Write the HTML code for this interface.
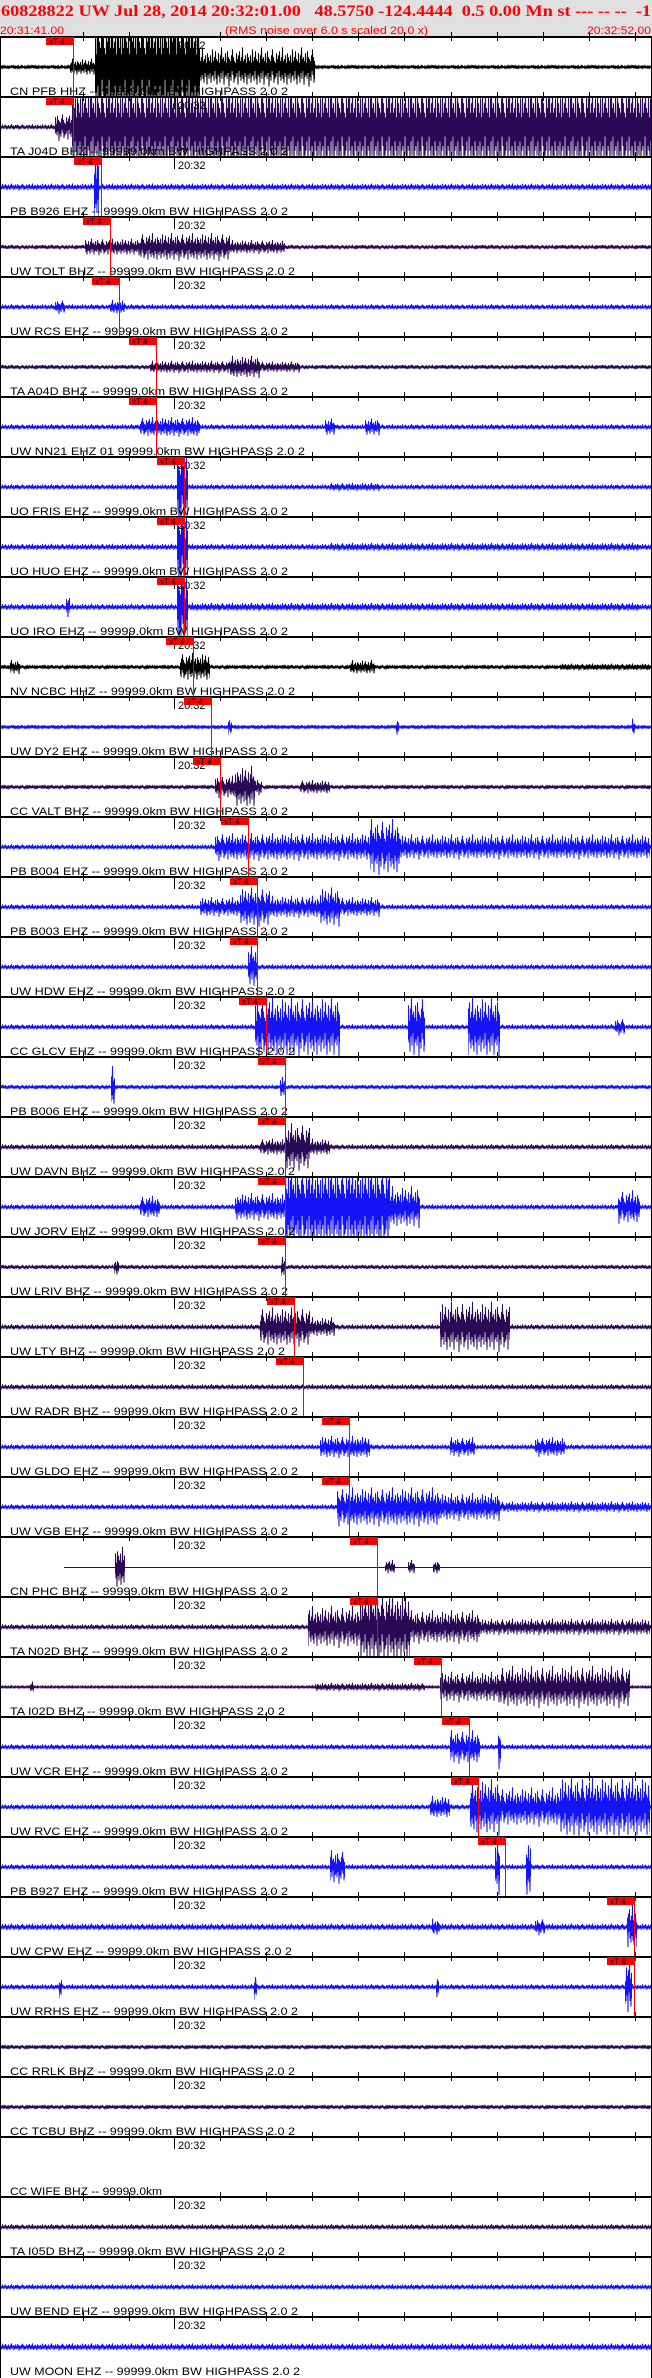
<!DOCTYPE html>
<html><head><meta charset="utf-8">
<style>
html,body{margin:0;padding:0;background:#fff;}
body{width:652px;height:2378px;overflow:hidden;position:relative;}
#hdr{position:absolute;left:0;top:0;width:652px;height:37px;background:#e0e0e0;}
svg{position:absolute;left:0;top:0;}
.l,.t{font-family:"Liberation Sans",sans-serif;font-size:11px;fill:#000;stroke:none;}
.m{font-family:"Liberation Sans",sans-serif;font-size:8px;fill:#000;stroke:none;}
</style></head>
<body>
<div id="hdr"></div>
<svg width="652" height="2378" xmlns="http://www.w3.org/2000/svg" xmlns:xlink="http://www.w3.org/1999/xlink">
<defs>
<path id="z" fill="none" vector-effect="non-scaling-stroke" stroke-width="1" d="M0 .3L.5-.6 1 .8 1.5-.2 2 .5 2.5-.9 3 .4 3.5-.3 4 .7 4.5-.5 5 .2 5.5-.8 6 .6 6.5-.4 7 .9 7.5-.3 8 .4 8.5-.7 9 .5 9.5-.2 10 .8 10.5-.6 11 .3 11.5-1 12 .6 12.5-.4 13 .2 13.5-.5 14 .9 14.5-.3 15 .5 15.5-.7 16 .4 16.5-.2 17 .6 17.5-.8 18 .3 18.5-.5 19 1 19.5-.4 20 .5 20.5-.3 21 .7 21.5-.6 22 .2 22.5-.9 23 .4 23.5-.5 24 .8 24.5-.3 25 .6 25.5-.2 26 .5 26.5-.7 27 .3 27.5-.4 28 .9 28.5-.6 29 .2 29.5-.8 30 .5 30.5-.3 31 .7 31.5-.5 32 .4 32.5-1 33 .6 33.5-.3 34 .8 34.5-.4 35 .3 35.5-.6 36 .5 36.5-.2 37 .9 37.5-.7 38 .4 38.5-.5 39 .6 39.5-.3 40 .3"/>
<g id="zz" transform="scale(1,1.4)">
<use xlink:href="#z" x="0"/><use xlink:href="#z" x="40"/><use xlink:href="#z" x="80"/><use xlink:href="#z" x="120"/><use xlink:href="#z" x="160"/><use xlink:href="#z" x="200"/><use xlink:href="#z" x="240"/><use xlink:href="#z" x="280"/><use xlink:href="#z" x="320"/><use xlink:href="#z" x="360"/><use xlink:href="#z" x="400"/><use xlink:href="#z" x="440"/><use xlink:href="#z" x="480"/><use xlink:href="#z" x="520"/><use xlink:href="#z" x="560"/><use xlink:href="#z" x="600"/><use xlink:href="#z" x="640"/>
</g>
<g id="tk" fill="#000" stroke="none">
<rect x="0" y="-1" width="652" height="2"/>
<rect x="83" y="-5" width="1" height="9"/><rect x="129" y="-5" width="1" height="9"/><rect x="220" y="-5" width="1" height="9"/><rect x="266" y="-5" width="1" height="9"/><rect x="312" y="-5" width="1" height="9"/><rect x="358" y="-5" width="1" height="9"/><rect x="404" y="-5" width="1" height="9"/><rect x="451" y="-5" width="1" height="9"/><rect x="497" y="-5" width="1" height="9"/><rect x="543" y="-5" width="1" height="9"/><rect x="589" y="-5" width="1" height="9"/><rect x="635" y="-5" width="1" height="9"/>
<rect x="174" y="0" width="1" height="12"/>
<text class="t" x="178" y="12">20:32</text>
</g>
<g id="mk" stroke="none">
<rect x="0" y="0" width="28" height="8" fill="#ff0000"/>
<text class="m" x="3" y="7.5">xT 4</text>
<rect x="27" y="0" width="1" height="60" fill="#ff0000"/>
</g>
</defs>
<text x="1" y="16" fill="#ff0000" font-family="Liberation Serif, serif" font-weight="bold" font-size="16" textLength="650" lengthAdjust="spacingAndGlyphs" xml:space="preserve">60828822 UW Jul 28, 2014 20:32:01.00   48.5750 -124.4444  0.5 0.00 Mn st --- -- --  -1</text>
<text x="0" y="34" fill="#ff0000" font-family="Liberation Sans, sans-serif" font-size="11" textLength="64" lengthAdjust="spacingAndGlyphs">20:31:41.00</text>
<text x="225" y="34" fill="#ff0000" font-family="Liberation Sans, sans-serif" font-size="11" textLength="203" lengthAdjust="spacingAndGlyphs">(RMS noise over 6.0 s scaled 20.0 x)</text>
<text x="587" y="34" fill="#ff0000" font-family="Liberation Sans, sans-serif" font-size="11" textLength="64" lengthAdjust="spacingAndGlyphs">20:32:52.00</text>

<g transform="translate(0,37)"><g stroke="#000">
<svg x="1" width="650" height="60"><use xlink:href="#zz" transform="translate(-1,30) scale(1,1.3)"/></svg>
<svg x="70" width="25" height="60"><use xlink:href="#zz" transform="translate(-70,30) scale(1,6)"/></svg>
<svg x="95" width="105" height="60"><use xlink:href="#zz" transform="translate(-95,30) scale(1,45)"/></svg>
<svg x="200" width="115" height="60"><use xlink:href="#zz" transform="translate(-190,30) scale(1,14)"/></svg>
</g><use xlink:href="#tk"/><text class="l" x="10" y="58" textLength="278" lengthAdjust="spacingAndGlyphs">CN PFB HHZ -- 99999.0km BW  HIGHPASS  2.0  2</text><use xlink:href="#mk" x="46"/></g>

<g transform="translate(0,97)"><g stroke="#2a0a55">
<svg x="1" width="650" height="60"><use xlink:href="#zz" transform="translate(-1,30) scale(1,2)"/></svg>
<svg x="55" width="17" height="60"><use xlink:href="#zz" transform="translate(-55,30) scale(1,10)"/></svg>
<svg x="72" width="579" height="60"><use xlink:href="#zz" transform="translate(-72,30) scale(1,34)"/></svg>
</g><use xlink:href="#tk"/><text class="l" x="10" y="58" textLength="278" lengthAdjust="spacingAndGlyphs">TA J04D BHZ -- 99999.0km BW  HIGHPASS  2.0  2</text><use xlink:href="#mk" x="46"/></g>

<g transform="translate(0,157)"><g stroke="#1414f5">
<svg x="1" width="650" height="60"><use xlink:href="#zz" transform="translate(-1,30) scale(1,2.5)"/></svg>
<svg x="94" width="5" height="60"><use xlink:href="#zz" transform="translate(-94,30) scale(1,30)"/></svg>
</g><use xlink:href="#tk"/><text class="l" x="10" y="58" textLength="278" lengthAdjust="spacingAndGlyphs">PB B926 EHZ -- 99999.0km BW  HIGHPASS  2.0  2</text><use xlink:href="#mk" x="74"/></g>

<g transform="translate(0,217)"><g stroke="#2a0a55">
<svg x="1" width="650" height="60"><use xlink:href="#zz" transform="translate(-1,30) scale(1,1.6)"/></svg>
<svg x="85" width="55" height="60"><use xlink:href="#zz" transform="translate(-85,30) scale(1,6)"/></svg>
<svg x="140" width="90" height="60"><use xlink:href="#zz" transform="translate(-140,30) scale(1,10)"/></svg>
<svg x="230" width="55" height="60"><use xlink:href="#zz" transform="translate(-230,30) scale(1,5)"/></svg>
</g><use xlink:href="#tk"/><text class="l" x="10" y="58" textLength="285" lengthAdjust="spacingAndGlyphs">UW TOLT BHZ -- 99999.0km BW  HIGHPASS  2.0  2</text><use xlink:href="#mk" x="83"/></g>

<g transform="translate(0,277)"><g stroke="#1414f5">
<svg x="1" width="650" height="60"><use xlink:href="#zz" transform="translate(-1,30) scale(1,2)"/></svg>
<svg x="55" width="10" height="60"><use xlink:href="#zz" transform="translate(-55,30) scale(1,5)"/></svg>
<svg x="110" width="15" height="60"><use xlink:href="#zz" transform="translate(-110,30) scale(1,5)"/></svg>
</g><use xlink:href="#tk"/><text class="l" x="10" y="58" textLength="278" lengthAdjust="spacingAndGlyphs">UW RCS EHZ -- 99999.0km BW  HIGHPASS  2.0  2</text><use xlink:href="#mk" x="92"/></g>

<g transform="translate(0,337)"><g stroke="#2a0a55">
<svg x="1" width="650" height="60"><use xlink:href="#zz" transform="translate(-1,30) scale(1,1.6)"/></svg>
<svg x="150" width="80" height="60"><use xlink:href="#zz" transform="translate(-150,30) scale(1,4.5)"/></svg>
<svg x="230" width="30" height="60"><use xlink:href="#zz" transform="translate(-230,30) scale(1,8)"/></svg>
<svg x="260" width="40" height="60"><use xlink:href="#zz" transform="translate(-260,30) scale(1,4)"/></svg>
</g><use xlink:href="#tk"/><text class="l" x="10" y="58" textLength="278" lengthAdjust="spacingAndGlyphs">TA A04D BHZ -- 99999.0km BW  HIGHPASS  2.0  2</text><use xlink:href="#mk" x="129"/></g>

<g transform="translate(0,397)"><g stroke="#1414f5">
<svg x="1" width="650" height="60"><use xlink:href="#zz" transform="translate(-1,30) scale(1,2)"/></svg>
<svg x="140" width="60" height="60"><use xlink:href="#zz" transform="translate(-140,30) scale(1,7)"/></svg>
<svg x="325" width="10" height="60"><use xlink:href="#zz" transform="translate(-325,30) scale(1,6)"/></svg>
<svg x="365" width="15" height="60"><use xlink:href="#zz" transform="translate(-365,30) scale(1,6)"/></svg>
</g><use xlink:href="#tk"/><text class="l" x="10" y="58" textLength="295" lengthAdjust="spacingAndGlyphs">UW NN21 EHZ 01 99999.0km BW  HIGHPASS  2.0  2</text><use xlink:href="#mk" x="129"/></g>

<g transform="translate(0,457)"><g stroke="#1414f5">
<svg x="1" width="650" height="60"><use xlink:href="#zz" transform="translate(-1,30) scale(1,2)"/></svg>
<svg x="177" width="11" height="60"><use xlink:href="#zz" transform="translate(-177,30) scale(1,30)"/></svg>
<svg x="330" width="50" height="60"><use xlink:href="#zz" transform="translate(-330,30) scale(1,3)"/></svg>
</g><use xlink:href="#tk"/><text class="l" x="10" y="58" textLength="278" lengthAdjust="spacingAndGlyphs">UO FRIS EHZ -- 99999.0km BW  HIGHPASS  2.0  2</text><use xlink:href="#mk" x="157"/></g>

<g transform="translate(0,517)"><g stroke="#1414f5">
<svg x="1" width="650" height="60"><use xlink:href="#zz" transform="translate(-1,30) scale(1,2.3)"/></svg>
<svg x="177" width="11" height="60"><use xlink:href="#zz" transform="translate(-177,30) scale(1,30)"/></svg>
<svg x="330" width="310" height="60"><use xlink:href="#zz" transform="translate(-330,30) scale(1,3)"/></svg>
</g><use xlink:href="#tk"/><text class="l" x="10" y="58" textLength="278" lengthAdjust="spacingAndGlyphs">UO HUO EHZ -- 99999.0km BW  HIGHPASS  2.0  2</text><use xlink:href="#mk" x="157"/></g>

<g transform="translate(0,577)"><g stroke="#1414f5">
<svg x="1" width="650" height="60"><use xlink:href="#zz" transform="translate(-1,30) scale(1,2.3)"/></svg>
<svg x="66" width="4" height="60"><use xlink:href="#zz" transform="translate(-66,30) scale(1,8)"/></svg>
<svg x="177" width="11" height="60"><use xlink:href="#zz" transform="translate(-177,30) scale(1,30)"/></svg>
<svg x="190" width="450" height="60"><use xlink:href="#zz" transform="translate(-190,30) scale(1,3)"/></svg>
</g><use xlink:href="#tk"/><text class="l" x="10" y="58" textLength="278" lengthAdjust="spacingAndGlyphs">UO IRO EHZ -- 99999.0km BW  HIGHPASS  2.0  2</text><use xlink:href="#mk" x="157"/></g>

<g transform="translate(0,637)"><g stroke="#000">
<svg x="1" width="650" height="60"><use xlink:href="#zz" transform="translate(-1,30) scale(1,1.5)"/></svg>
<svg x="10" width="10" height="60"><use xlink:href="#zz" transform="translate(-10,30) scale(1,5)"/></svg>
<svg x="180" width="30" height="60"><use xlink:href="#zz" transform="translate(-180,30) scale(1,10)"/></svg>
<svg x="350" width="25" height="60"><use xlink:href="#zz" transform="translate(-350,30) scale(1,5)"/></svg>
<svg x="560" width="90" height="60"><use xlink:href="#zz" transform="translate(-560,30) scale(1,2.5)"/></svg>
</g><use xlink:href="#tk"/><text class="l" x="10" y="58" textLength="285" lengthAdjust="spacingAndGlyphs">NV NCBC HHZ -- 99999.0km BW  HIGHPASS  2.0  2</text><use xlink:href="#mk" x="166"/></g>

<g transform="translate(0,697)"><g stroke="#1414f5">
<svg x="1" width="650" height="60"><use xlink:href="#zz" transform="translate(-1,30) scale(1,1.3)"/></svg>
<svg x="228" width="4" height="60"><use xlink:href="#zz" transform="translate(-228,30) scale(1,6)"/></svg>
<svg x="396" width="3" height="60"><use xlink:href="#zz" transform="translate(-396,30) scale(1,6)"/></svg>
<svg x="632" width="3" height="60"><use xlink:href="#zz" transform="translate(-632,30) scale(1,6)"/></svg>
</g><use xlink:href="#tk"/><text class="l" x="10" y="58" textLength="278" lengthAdjust="spacingAndGlyphs">UW DY2 EHZ -- 99999.0km BW  HIGHPASS  2.0  2</text><use xlink:href="#mk" x="184"/></g>

<g transform="translate(0,757)"><g stroke="#2a0a55">
<svg x="1" width="650" height="60"><use xlink:href="#zz" transform="translate(-1,30) scale(1,1.5)"/></svg>
<svg x="215" width="20" height="60"><use xlink:href="#zz" transform="translate(-215,30) scale(1,8)"/></svg>
<svg x="235" width="20" height="60"><use xlink:href="#zz" transform="translate(-235,30) scale(1,15)"/></svg>
<svg x="255" width="7" height="60"><use xlink:href="#zz" transform="translate(-255,30) scale(1,6)"/></svg>
<svg x="300" width="30" height="60"><use xlink:href="#zz" transform="translate(-300,30) scale(1,5)"/></svg>
</g><use xlink:href="#tk"/><text class="l" x="10" y="58" textLength="278" lengthAdjust="spacingAndGlyphs">CC VALT BHZ -- 99999.0km BW  HIGHPASS  2.0  2</text><use xlink:href="#mk" x="193"/></g>

<g transform="translate(0,817)"><g stroke="#1414f5">
<svg x="1" width="650" height="60"><use xlink:href="#zz" transform="translate(-1,30) scale(1,2)"/></svg>
<svg x="215" width="155" height="60"><use xlink:href="#zz" transform="translate(-215,30) scale(1,10)"/></svg>
<svg x="370" width="30" height="60"><use xlink:href="#zz" transform="translate(-370,30) scale(1,20)"/></svg>
<svg x="400" width="250" height="60"><use xlink:href="#zz" transform="translate(-400,30) scale(1,9)"/></svg>
</g><use xlink:href="#tk"/><text class="l" x="10" y="58" textLength="278" lengthAdjust="spacingAndGlyphs">PB B004 EHZ -- 99999.0km BW  HIGHPASS  2.0  2</text><use xlink:href="#mk" x="221"/></g>

<g transform="translate(0,877)"><g stroke="#1414f5">
<svg x="1" width="650" height="60"><use xlink:href="#zz" transform="translate(-1,30) scale(1,2)"/></svg>
<svg x="200" width="40" height="60"><use xlink:href="#zz" transform="translate(-200,30) scale(1,7)"/></svg>
<svg x="240" width="30" height="60"><use xlink:href="#zz" transform="translate(-240,30) scale(1,14)"/></svg>
<svg x="270" width="50" height="60"><use xlink:href="#zz" transform="translate(-270,30) scale(1,8)"/></svg>
<svg x="320" width="20" height="60"><use xlink:href="#zz" transform="translate(-320,30) scale(1,14)"/></svg>
<svg x="340" width="40" height="60"><use xlink:href="#zz" transform="translate(-340,30) scale(1,7)"/></svg>
</g><use xlink:href="#tk"/><text class="l" x="10" y="58" textLength="278" lengthAdjust="spacingAndGlyphs">PB B003 EHZ -- 99999.0km BW  HIGHPASS  2.0  2</text><use xlink:href="#mk" x="230"/></g>

<g transform="translate(0,937)"><g stroke="#1414f5">
<svg x="1" width="650" height="60"><use xlink:href="#zz" transform="translate(-1,30) scale(1,2)"/></svg>
<svg x="248" width="10" height="60"><use xlink:href="#zz" transform="translate(-248,30) scale(1,15)"/></svg>
</g><use xlink:href="#tk"/><text class="l" x="10" y="58" textLength="285" lengthAdjust="spacingAndGlyphs">UW HDW EHZ -- 99999.0km BW  HIGHPASS  2.0  2</text><use xlink:href="#mk" x="230"/></g>

<g transform="translate(0,997)"><g stroke="#1414f5">
<svg x="1" width="650" height="60"><use xlink:href="#zz" transform="translate(-1,30) scale(1,2)"/></svg>
<svg x="255" width="85" height="60"><use xlink:href="#zz" transform="translate(-255,30) scale(1,22)"/></svg>
<svg x="408" width="17" height="60"><use xlink:href="#zz" transform="translate(-408,30) scale(1,22)"/></svg>
<svg x="468" width="32" height="60"><use xlink:href="#zz" transform="translate(-468,30) scale(1,22)"/></svg>
<svg x="615" width="10" height="60"><use xlink:href="#zz" transform="translate(-615,30) scale(1,6)"/></svg>
</g><use xlink:href="#tk"/><text class="l" x="10" y="58" textLength="285" lengthAdjust="spacingAndGlyphs">CC GLCV EHZ -- 99999.0km BW  HIGHPASS  2.0  2</text><use xlink:href="#mk" x="239"/></g>

<g transform="translate(0,1057)"><g stroke="#1414f5">
<svg x="1" width="650" height="60"><use xlink:href="#zz" transform="translate(-1,30) scale(1,1.6)"/></svg>
<svg x="111" width="4" height="60"><use xlink:href="#zz" transform="translate(-111,30) scale(1,15)"/></svg>
<svg x="280" width="5" height="60"><use xlink:href="#zz" transform="translate(-280,30) scale(1,8)"/></svg>
</g><use xlink:href="#tk"/><text class="l" x="10" y="58" textLength="278" lengthAdjust="spacingAndGlyphs">PB B006 EHZ -- 99999.0km BW  HIGHPASS  2.0  2</text><use xlink:href="#mk" x="258"/></g>

<g transform="translate(0,1117)"><g stroke="#2a0a55">
<svg x="1" width="650" height="60"><use xlink:href="#zz" transform="translate(-1,30) scale(1,2)"/></svg>
<svg x="260" width="25" height="60"><use xlink:href="#zz" transform="translate(-260,30) scale(1,6)"/></svg>
<svg x="285" width="25" height="60"><use xlink:href="#zz" transform="translate(-285,30) scale(1,17)"/></svg>
<svg x="310" width="20" height="60"><use xlink:href="#zz" transform="translate(-310,30) scale(1,6)"/></svg>
</g><use xlink:href="#tk"/><text class="l" x="10" y="58" textLength="285" lengthAdjust="spacingAndGlyphs">UW DAVN BHZ -- 99999.0km BW  HIGHPASS  2.0  2</text><use xlink:href="#mk" x="258"/></g>

<g transform="translate(0,1177)"><g stroke="#1414f5">
<svg x="1" width="650" height="60"><use xlink:href="#zz" transform="translate(-1,30) scale(1,2)"/></svg>
<svg x="140" width="20" height="60"><use xlink:href="#zz" transform="translate(-140,30) scale(1,8)"/></svg>
<svg x="235" width="50" height="60"><use xlink:href="#zz" transform="translate(-235,30) scale(1,10)"/></svg>
<svg x="285" width="105" height="60"><use xlink:href="#zz" transform="translate(-285,30) scale(1,32)"/></svg>
<svg x="390" width="30" height="60"><use xlink:href="#zz" transform="translate(-390,30) scale(1,15)"/></svg>
<svg x="618" width="22" height="60"><use xlink:href="#zz" transform="translate(-618,30) scale(1,12)"/></svg>
</g><use xlink:href="#tk"/><text class="l" x="10" y="58" textLength="285" lengthAdjust="spacingAndGlyphs">UW JORV EHZ -- 99999.0km BW  HIGHPASS  2.0  2</text><use xlink:href="#mk" x="258"/></g>

<g transform="translate(0,1237)"><g stroke="#2a0a55">
<svg x="1" width="650" height="60"><use xlink:href="#zz" transform="translate(-1,30) scale(1,1.6)"/></svg>
<svg x="114" width="5" height="60"><use xlink:href="#zz" transform="translate(-114,30) scale(1,6)"/></svg>
<svg x="281" width="4" height="60"><use xlink:href="#zz" transform="translate(-281,30) scale(1,8)"/></svg>
</g><use xlink:href="#tk"/><text class="l" x="10" y="58" textLength="278" lengthAdjust="spacingAndGlyphs">UW LRIV BHZ -- 99999.0km BW  HIGHPASS  2.0  2</text><use xlink:href="#mk" x="258"/></g>

<g transform="translate(0,1297)"><g stroke="#2a0a55">
<svg x="1" width="650" height="60"><use xlink:href="#zz" transform="translate(-1,30) scale(1,2)"/></svg>
<svg x="260" width="50" height="60"><use xlink:href="#zz" transform="translate(-260,30) scale(1,14)"/></svg>
<svg x="310" width="25" height="60"><use xlink:href="#zz" transform="translate(-310,30) scale(1,7)"/></svg>
<svg x="440" width="70" height="60"><use xlink:href="#zz" transform="translate(-440,30) scale(1,18)"/></svg>
</g><use xlink:href="#tk"/><text class="l" x="10" y="58" textLength="275" lengthAdjust="spacingAndGlyphs">UW LTY BHZ -- 99999.0km BW  HIGHPASS  2.0  2</text><use xlink:href="#mk" x="267"/></g>

<g transform="translate(0,1357)"><g stroke="#2a0a55">
<svg x="1" width="650" height="60"><use xlink:href="#zz" transform="translate(-1,30) scale(1,2)"/></svg>
</g><use xlink:href="#tk"/><text class="l" x="10" y="58" textLength="288" lengthAdjust="spacingAndGlyphs">UW RADR BHZ -- 99999.0km BW  HIGHPASS  2.0  2</text><use xlink:href="#mk" x="276"/></g>

<g transform="translate(0,1417)"><g stroke="#1414f5">
<svg x="1" width="650" height="60"><use xlink:href="#zz" transform="translate(-1,30) scale(1,2)"/></svg>
<svg x="320" width="50" height="60"><use xlink:href="#zz" transform="translate(-320,30) scale(1,8)"/></svg>
<svg x="450" width="25" height="60"><use xlink:href="#zz" transform="translate(-450,30) scale(1,7)"/></svg>
<svg x="535" width="30" height="60"><use xlink:href="#zz" transform="translate(-535,30) scale(1,7)"/></svg>
</g><use xlink:href="#tk"/><text class="l" x="10" y="58" textLength="288" lengthAdjust="spacingAndGlyphs">UW GLDO EHZ -- 99999.0km BW  HIGHPASS  2.0  2</text><use xlink:href="#mk" x="322"/></g>

<g transform="translate(0,1477)"><g stroke="#1414f5">
<svg x="1" width="650" height="60"><use xlink:href="#zz" transform="translate(-1,30) scale(1,2)"/></svg>
<svg x="337" width="103" height="60"><use xlink:href="#zz" transform="translate(-337,30) scale(1,14)"/></svg>
<svg x="440" width="60" height="60"><use xlink:href="#zz" transform="translate(-440,30) scale(1,10)"/></svg>
<svg x="500" width="150" height="60"><use xlink:href="#zz" transform="translate(-500,30) scale(1,4)"/></svg>
</g><use xlink:href="#tk"/><text class="l" x="10" y="58" textLength="278" lengthAdjust="spacingAndGlyphs">UW VGB EHZ -- 99999.0km BW  HIGHPASS  2.0  2</text><use xlink:href="#mk" x="322"/></g>

<g transform="translate(0,1537)"><g stroke="#2a0a55">
<rect x="64" y="30" width="587" height="1" fill="#2a0a55" stroke="none"/>
<svg x="115" width="10" height="60"><use xlink:href="#zz" transform="translate(-115,30) scale(1,16)"/></svg>
<svg x="385" width="10" height="60"><use xlink:href="#zz" transform="translate(-385,30) scale(1,5)"/></svg>
<svg x="408" width="7" height="60"><use xlink:href="#zz" transform="translate(-408,30) scale(1,5)"/></svg>
<svg x="433" width="7" height="60"><use xlink:href="#zz" transform="translate(-433,30) scale(1,5)"/></svg>
</g><use xlink:href="#tk"/><text class="l" x="10" y="58" textLength="278" lengthAdjust="spacingAndGlyphs">CN PHC BHZ -- 99999.0km BW  HIGHPASS  2.0  2</text><use xlink:href="#mk" x="350"/></g>

<g transform="translate(0,1597)"><g stroke="#2a0a55">
<svg x="1" width="650" height="60"><use xlink:href="#zz" transform="translate(-1,30) scale(1,2)"/></svg>
<svg x="308" width="52" height="60"><use xlink:href="#zz" transform="translate(-308,30) scale(1,15)"/></svg>
<svg x="360" width="50" height="60"><use xlink:href="#zz" transform="translate(-360,30) scale(1,26)"/></svg>
<svg x="410" width="70" height="60"><use xlink:href="#zz" transform="translate(-410,30) scale(1,12)"/></svg>
<svg x="480" width="170" height="60"><use xlink:href="#zz" transform="translate(-480,30) scale(1,6)"/></svg>
</g><use xlink:href="#tk"/><text class="l" x="10" y="58" textLength="278" lengthAdjust="spacingAndGlyphs">TA N02D BHZ -- 99999.0km BW  HIGHPASS  2.0  2</text><use xlink:href="#mk" x="350"/></g>

<g transform="translate(0,1657)"><g stroke="#2a0a55">
<svg x="1" width="650" height="60"><use xlink:href="#zz" transform="translate(-1,30) scale(1,0.8)"/></svg>
<svg x="30" width="4" height="60"><use xlink:href="#zz" transform="translate(-30,30) scale(1,4)"/></svg>
<svg x="315" width="110" height="60"><use xlink:href="#zz" transform="translate(-315,30) scale(1,3)"/></svg>
<svg x="440" width="60" height="60"><use xlink:href="#zz" transform="translate(-440,30) scale(1,11)"/></svg>
<svg x="500" width="130" height="60"><use xlink:href="#zz" transform="translate(-500,30) scale(1,15)"/></svg>
</g><use xlink:href="#tk"/><text class="l" x="10" y="58" textLength="275" lengthAdjust="spacingAndGlyphs">TA I02D BHZ -- 99999.0km BW  HIGHPASS  2.0  2</text><use xlink:href="#mk" x="414"/></g>

<g transform="translate(0,1717)"><g stroke="#1414f5">
<svg x="1" width="650" height="60"><use xlink:href="#zz" transform="translate(-1,30) scale(1,2)"/></svg>
<svg x="450" width="30" height="60"><use xlink:href="#zz" transform="translate(-450,30) scale(1,12)"/></svg>
<svg x="498" width="3" height="60"><use xlink:href="#zz" transform="translate(-498,30) scale(1,16)"/></svg>
</g><use xlink:href="#tk"/><text class="l" x="10" y="58" textLength="278" lengthAdjust="spacingAndGlyphs">UW VCR EHZ -- 99999.0km BW  HIGHPASS  2.0  2</text><use xlink:href="#mk" x="442"/></g>

<g transform="translate(0,1777)"><g stroke="#1414f5">
<svg x="1" width="650" height="60"><use xlink:href="#zz" transform="translate(-1,30) scale(1,2)"/></svg>
<svg x="430" width="20" height="60"><use xlink:href="#zz" transform="translate(-430,30) scale(1,8)"/></svg>
<svg x="470" width="30" height="60"><use xlink:href="#zz" transform="translate(-470,30) scale(1,20)"/></svg>
<svg x="500" width="60" height="60"><use xlink:href="#zz" transform="translate(-500,30) scale(1,14)"/></svg>
<svg x="560" width="90" height="60"><use xlink:href="#zz" transform="translate(-560,30) scale(1,22)"/></svg>
</g><use xlink:href="#tk"/><text class="l" x="10" y="58" textLength="278" lengthAdjust="spacingAndGlyphs">UW RVC EHZ -- 99999.0km BW  HIGHPASS  2.0  2</text><use xlink:href="#mk" x="451"/></g>

<g transform="translate(0,1837)"><g stroke="#1414f5">
<svg x="1" width="650" height="60"><use xlink:href="#zz" transform="translate(-1,30) scale(1,2)"/></svg>
<svg x="330" width="15" height="60"><use xlink:href="#zz" transform="translate(-330,30) scale(1,12)"/></svg>
<svg x="495" width="5" height="60"><use xlink:href="#zz" transform="translate(-495,30) scale(1,20)"/></svg>
<svg x="526" width="5" height="60"><use xlink:href="#zz" transform="translate(-526,30) scale(1,22)"/></svg>
</g><use xlink:href="#tk"/><text class="l" x="10" y="58" textLength="278" lengthAdjust="spacingAndGlyphs">PB B927 EHZ -- 99999.0km BW  HIGHPASS  2.0  2</text><use xlink:href="#mk" x="478"/></g>

<g transform="translate(0,1897)"><g stroke="#1414f5">
<svg x="1" width="650" height="60"><use xlink:href="#zz" transform="translate(-1,30) scale(1,2.5)"/></svg>
<svg x="432" width="8" height="60"><use xlink:href="#zz" transform="translate(-432,30) scale(1,6)"/></svg>
<svg x="535" width="10" height="60"><use xlink:href="#zz" transform="translate(-535,30) scale(1,6)"/></svg>
<svg x="627" width="10" height="60"><use xlink:href="#zz" transform="translate(-627,30) scale(1,16)"/></svg>
</g><use xlink:href="#tk"/><text class="l" x="10" y="58" textLength="282" lengthAdjust="spacingAndGlyphs">UW CPW EHZ -- 99999.0km BW  HIGHPASS  2.0  2</text><use xlink:href="#mk" x="607"/></g>

<g transform="translate(0,1957)"><g stroke="#1414f5">
<svg x="1" width="650" height="60"><use xlink:href="#zz" transform="translate(-1,30) scale(1,2)"/></svg>
<svg x="59" width="3" height="60"><use xlink:href="#zz" transform="translate(-59,30) scale(1,8)"/></svg>
<svg x="254" width="3" height="60"><use xlink:href="#zz" transform="translate(-254,30) scale(1,10)"/></svg>
<svg x="436" width="3" height="60"><use xlink:href="#zz" transform="translate(-436,30) scale(1,8)"/></svg>
<svg x="625" width="7" height="60"><use xlink:href="#zz" transform="translate(-625,30) scale(1,20)"/></svg>
</g><use xlink:href="#tk"/><text class="l" x="10" y="58" textLength="288" lengthAdjust="spacingAndGlyphs">UW RRHS EHZ -- 99999.0km BW  HIGHPASS  2.0  2</text><use xlink:href="#mk" x="607"/></g>

<g transform="translate(0,2017)"><g stroke="#2a0a55">
<svg x="1" width="650" height="60"><use xlink:href="#zz" transform="translate(-1,30) scale(1,1.5)"/></svg>
</g><use xlink:href="#tk"/><text class="l" x="10" y="58" textLength="285" lengthAdjust="spacingAndGlyphs">CC RRLK BHZ -- 99999.0km BW  HIGHPASS  2.0  2</text></g>

<g transform="translate(0,2077)"><g stroke="#2a0a55">
<svg x="1" width="650" height="60"><use xlink:href="#zz" transform="translate(-1,30) scale(1,1.5)"/></svg>
</g><use xlink:href="#tk"/><text class="l" x="10" y="58" textLength="285" lengthAdjust="spacingAndGlyphs">CC TCBU BHZ -- 99999.0km BW  HIGHPASS  2.0  2</text></g>

<g transform="translate(0,2137)"><use xlink:href="#tk"/><text class="l" x="10" y="58" textLength="152" lengthAdjust="spacingAndGlyphs">CC WIFE BHZ -- 99999.0km</text></g>

<g transform="translate(0,2197)"><g stroke="#2a0a55">
<svg x="1" width="650" height="60"><use xlink:href="#zz" transform="translate(-1,30) scale(1,2)"/></svg>
</g><use xlink:href="#tk"/><text class="l" x="10" y="58" textLength="275" lengthAdjust="spacingAndGlyphs">TA I05D BHZ -- 99999.0km BW  HIGHPASS  2.0  2</text></g>

<g transform="translate(0,2257)"><g stroke="#1414f5">
<svg x="1" width="650" height="60"><use xlink:href="#zz" transform="translate(-1,30) scale(1,2)"/></svg>
</g><use xlink:href="#tk"/><text class="l" x="10" y="58" textLength="288" lengthAdjust="spacingAndGlyphs">UW BEND EHZ -- 99999.0km BW  HIGHPASS  2.0  2</text></g>

<g transform="translate(0,2317)"><g stroke="#1414f5">
<svg x="1" width="650" height="60"><use xlink:href="#zz" transform="translate(-1,30) scale(1,2.6)"/></svg>
</g><use xlink:href="#tk"/><text class="l" x="10" y="58" textLength="290" lengthAdjust="spacingAndGlyphs">UW MOON EHZ -- 99999.0km BW  HIGHPASS  2.0  2</text></g>

<rect x="0" y="37" width="1" height="2341" fill="#000"/>
<rect x="651" y="37" width="1" height="2341" fill="#000"/>
</svg>
</body></html>
